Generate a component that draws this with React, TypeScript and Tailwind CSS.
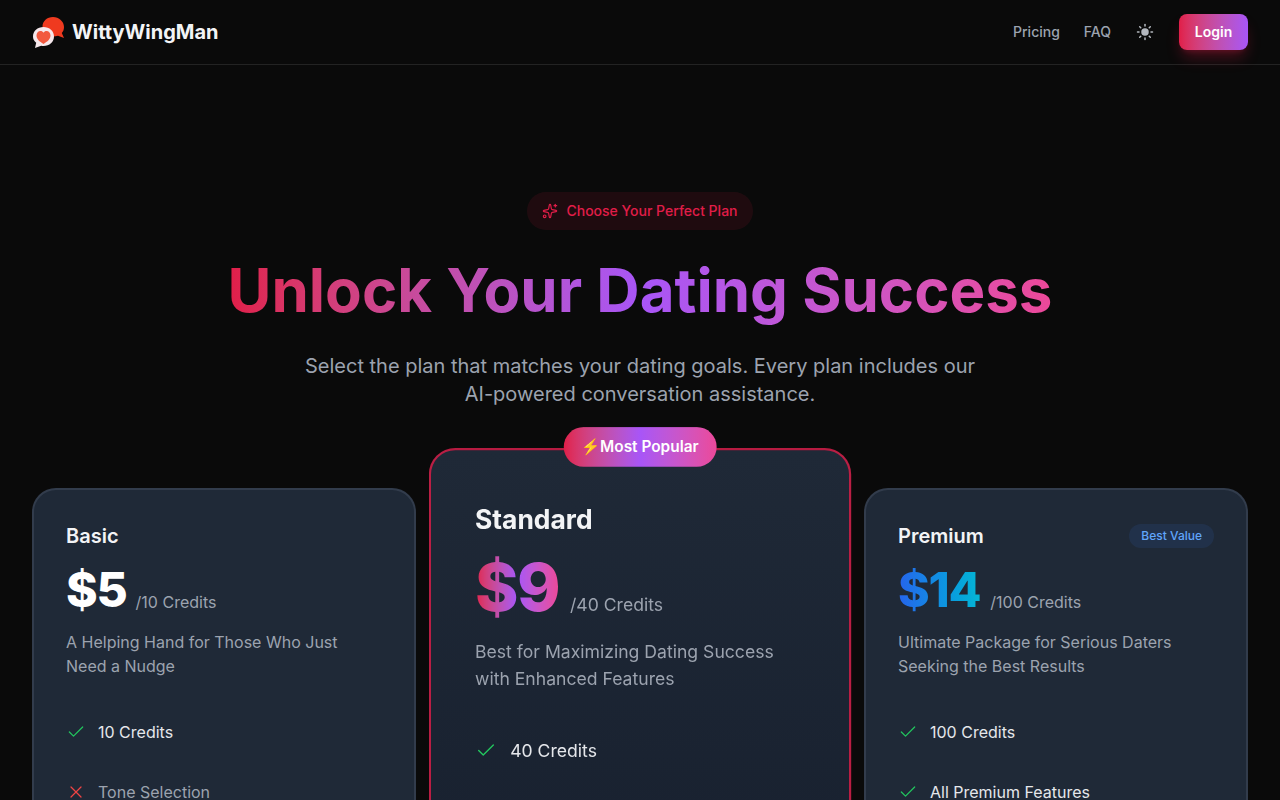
import { Check, Sparkles, Sun, X } from 'lucide-react';

const Logo = () => (
  <svg width="32" height="32" viewBox="0 0 32 32" className="shrink-0">
    <path d="M21 1c6 0 11 4.500 11 10 0 2.500-.8 4.500-2.200 6l2.200 5-6-2.200c-1.500.5-3.200.8-5 .8-6 0-10.500-4.500-10.500-10S15 1 21 1z" fill="#ef3a1f" />
    <path d="M11.500 11C17.500 11 22 15 22 20.500S17.500 30 11.500 30c-.8 0-1.500-.1-2.300-.2L3 32l1.200-5.300C1.800 25 1 22.800 1 20.500 1 15 5.500 11 11.500 11z" fill="#f6e8ec" />
    <path d="M11.500 28c-4-2.500-7-5-7-8.500 0-2.500 1.800-4.500 4-4.500 1.300 0 2.400.6 3 1.700.6-1.100 1.700-1.700 3-1.700 2.200 0 4 2 4 4.500 0 3.500-3 6-7 8.500z" fill="#f2593f" />
  </svg>
);

const Feature = ({ text, ok = true }: { text: string; ok?: boolean }) => (
  <li className="flex items-center gap-3">
    {ok ? <Check className="h-5 w-5 text-[#22c55e]" strokeWidth={1.5} /> : <X className="h-5 w-5 text-[#ef4444]" strokeWidth={1.5} />}
    <span className={ok ? 'text-[#e5e7eb]' : 'text-[#9ca3af]'}>{text}</span>
  </li>
);

export default function App() {
  return (
    <div className="min-h-screen bg-[#0a0a0a] font-['Inter',sans-serif] text-white">
      <header className="flex h-[65px] items-center justify-between border-b border-white/10 px-8">
        <div className="flex items-center gap-2">
          <Logo />
          <span className="text-xl font-bold text-[#f3f4f6]">WittyWingMan</span>
        </div>
        <nav className="flex items-center gap-6">
          <a className="text-sm font-medium text-[#9ca3af]">Pricing</a>
          <a className="text-sm font-medium text-[#9ca3af]">FAQ</a>
          <div className="flex h-5 w-5 items-center justify-center">
            <Sun className="h-[18px] w-[18px] fill-[#b4b8bf] text-[#b4b8bf]" />
          </div>
          <button className="h-9 w-[69px] rounded-lg bg-gradient-to-r from-[#e11d48] to-[#a855f7] text-sm font-semibold shadow-lg shadow-[#e11d48]/30">Login</button>
        </nav>
      </header>

      <main className="px-8 pt-[127px]">
        <section className="flex flex-col items-center text-center">
          <div className="flex h-[38px] items-center gap-2 rounded-full bg-[#e11d48]/10 px-[15px] text-sm font-medium text-[#e11d48]">
            <Sparkles className="h-4 w-4" strokeWidth={1.75} />
            Choose Your Perfect Plan
          </div>
          <h1 className="mt-[30px] bg-gradient-to-r from-[#e11d48] via-[#a855f7] to-[#ec4899] bg-clip-text pb-2 text-6xl font-bold text-transparent">Unlock Your Dating Success</h1>
          <p className="mt-6 max-w-2xl text-xl text-[#9ca3af]">Select the plan that matches your dating goals. Every plan includes our AI-powered conversation assistance.</p>
        </section>

        <section className="mt-[80px] grid grid-cols-3 gap-8">
          <article className="rounded-3xl border-2 border-[#374151]/80 bg-[#1f2937] p-8">
            <h3 className="text-xl font-semibold text-[#f3f4f6]">Basic</h3>
            <div className="mt-4 flex items-end gap-[9px]">
              <span className="text-5xl font-extrabold tracking-tight">$5</span>
              <span className="text-[#9ca3af]">/10 Credits</span>
            </div>
            <p className="mt-4 text-[#9ca3af]">A Helping Hand for Those Who Just Need a Nudge</p>
            <ul className="mt-[42px] flex flex-col gap-9">
              <Feature text="10 Credits" />
              <Feature text="Tone Selection" ok={false} />
            </ul>
          </article>

          <article className="relative h-[800px] scale-110 rounded-3xl border-2 border-[#e11d48]/80 bg-gradient-to-b from-[#1f2937] to-[#111827] px-10 pt-12 pb-10">
            <div className="absolute -top-[21px] left-1/2 flex h-9 -translate-x-1/2 items-center whitespace-nowrap rounded-full bg-gradient-to-r from-[#e11d48] via-[#a855f7] to-[#ec4899] px-4 text-sm font-semibold">⚡Most Popular</div>
            <h3 className="text-2xl font-bold text-[#f3f4f6]">Standard</h3>
            <div className="mt-[14px] flex items-end gap-[10px]">
              <span className="bg-gradient-to-r from-[#e11d48] via-[#a855f7] to-[#ec4899] bg-clip-text text-6xl font-extrabold tracking-tight text-transparent">$9</span>
              <span className="pb-[2px] text-[#9ca3af]">/40 Credits</span>
            </div>
            <p className="mt-[16.6px] text-[#9ca3af]">Best for Maximizing Dating Success with Enhanced Features</p>
            <ul className="mt-[42.4px] flex flex-col gap-9">
              <Feature text="40 Credits" />
            </ul>
          </article>

          <article className="rounded-3xl border-2 border-[#374151]/80 bg-[#1f2937] p-8">
            <div className="flex items-center justify-between">
              <h3 className="text-xl font-semibold text-[#f3f4f6]">Premium</h3>
              <span className="rounded-full bg-[#3b82f6]/10 px-3 py-1 text-xs font-medium text-[#60a5fa]">Best Value</span>
            </div>
            <div className="mt-4 flex items-end gap-[10px]">
              <span className="bg-gradient-to-r from-[#2563eb] to-[#06b6d4] bg-clip-text text-5xl font-extrabold tracking-tight text-transparent">$14</span>
              <span className="text-[#9ca3af]">/100 Credits</span>
            </div>
            <p className="mt-4 text-[#9ca3af]">Ultimate Package for Serious Daters Seeking the Best Results</p>
            <ul className="mt-[42px] flex flex-col gap-9">
              <Feature text="100 Credits" />
              <Feature text="All Premium Features" />
            </ul>
          </article>
        </section>
      </main>
    </div>
  );
}
